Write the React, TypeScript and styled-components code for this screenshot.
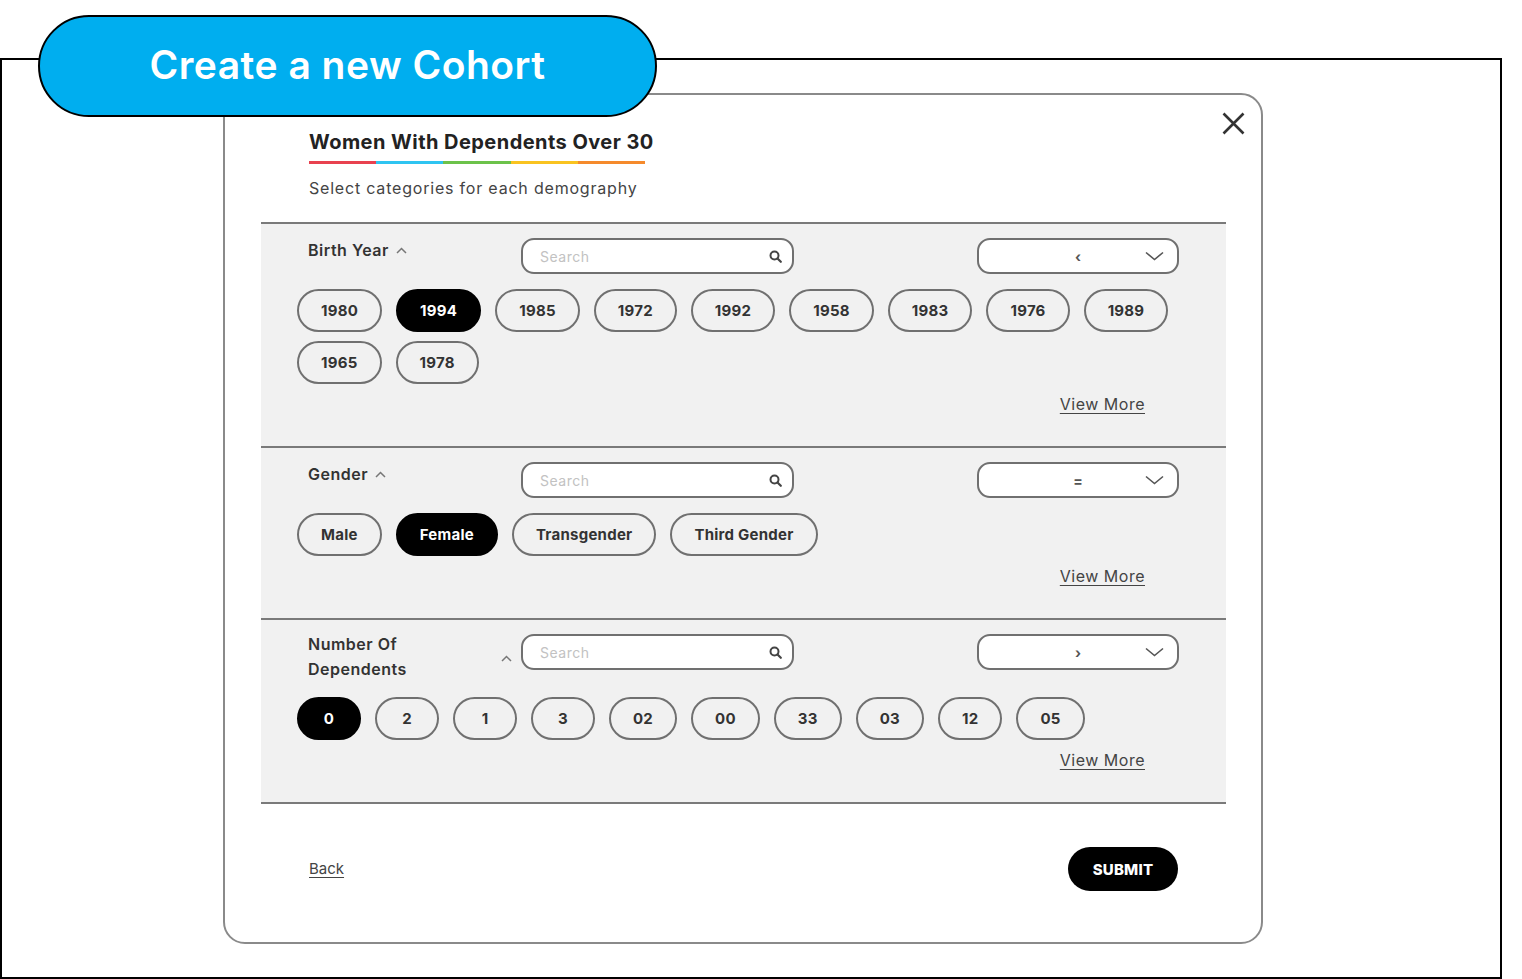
import React from 'react';
import styled, { createGlobalStyle } from 'styled-components';

const GlobalStyle = createGlobalStyle`
    body {
        margin: 0;
        background: #fff;
        font-family: 'Inter', 'Noto Sans', sans-serif;
        color: #333;
    }
    * {
        box-sizing: border-box;
    }
`;

const Page = styled.div`
    padding-top: 58px;
`;

const Frame = styled.div`
    position: relative;
    width: 1502px;
    height: 921px;
    border: 2px solid #000;
`;

const Badge = styled.div`
    position: absolute;
    top: -45px;
    left: 36px;
    width: 619px;
    height: 102px;
    border: 2px solid #000;
    border-radius: 51px;
    background: #00aeef;
    color: #fff;
    display: flex;
    align-items: center;
    justify-content: center;
    padding-bottom: 4px;
    font-size: 39px;
    font-weight: 600;
    letter-spacing: 0.5px;
    z-index: 2;
`;

const Card = styled.div`
    position: relative;
    margin: 33px 0 0 221px;
    width: 1040px;
    height: 851px;
    border: 2px solid #8a8a8a;
    border-radius: 22px;
    padding-top: 33px;
`;

const CloseBtn = styled.button`
    position: absolute;
    top: 17px;
    right: 16px;
    width: 23px;
    height: 23px;
    padding: 0;
    border: none;
    background: none;
    display: flex;
`;

const Header = styled.div`
    padding: 0 84px;
`;

const Title = styled.h2`
    margin: 0;
    display: inline-block;
    font-size: 20px;
    line-height: 28px;
    font-weight: 700;
    letter-spacing: 0.45px;
    color: #222;
`;

const Rainbow = styled.div`
    width: 336px;
    height: 3px;
    margin-top: 5px;
    background: linear-gradient(
        to right,
        #e8414f 0 20%,
        #2ec4f1 20% 40%,
        #6cc24a 40% 60%,
        #f9c320 60% 80%,
        #f58a2c 80% 100%
    );
`;

const Subtitle = styled.p`
    margin: 13px 0 0;
    font-size: 16px;
    line-height: 22px;
    letter-spacing: 0.8px;
    color: #444;
`;

const Sections = styled.div`
    margin: 23px 35px 0 36px;
    border-bottom: 2px solid #7a7a7a;
`;

const Section = styled.section`
    background: #f1f1f1;
    border-top: 2px solid #7a7a7a;
    padding: 14px 47px 32px 36px;
`;

const HeadRow = styled.div`
    display: flex;
    align-items: flex-start;
`;

const LabelCol = styled.div<{ $wrap?: boolean }>`
    width: 215px;
    margin-right: 9px;
    margin-top: ${({ $wrap }) => ($wrap ? '-2px' : '0')};
    padding-left: 11px;
    display: flex;
    align-items: center;
    min-height: ${({ $wrap }) => ($wrap ? '50px' : '25px')};
`;

const LabelText = styled.span<{ $wrap?: boolean }>`
    font-size: 16px;
    line-height: 25px;
    font-weight: 600;
    letter-spacing: 0.5px;
    color: #333;
    max-width: ${({ $wrap }) => ($wrap ? '110px' : 'none')};
`;

const Caret = styled.span<{ $push?: boolean }>`
    display: flex;
    margin-left: ${({ $push }) => ($push ? 'auto' : '7px')};
    margin-top: ${({ $push }) => ($push ? '2px' : '0')};
`;

const SearchBox = styled.label`
    width: 273px;
    height: 36px;
    display: flex;
    align-items: center;
    padding: 0 10px 0 17px;
    background: #fff;
    border: 2px solid #707070;
    border-radius: 13px;

    input {
        flex: 1;
        min-width: 0;
        border: none;
        outline: none;
        background: none;
        font-family: inherit;
        font-size: 14px;
        letter-spacing: 0.5px;
        color: #333;
        padding: 0;
    }
    input::placeholder {
        color: #c2c2c2;
    }
`;

const Dropdown = styled.div`
    margin-left: auto;
    width: 202px;
    height: 36px;
    display: flex;
    align-items: center;
    padding: 0 13px 0 0;
    background: #fff;
    border: 2px solid #707070;
    border-radius: 13px;
`;

const DropValue = styled.span`
    flex: 1;
    text-align: center;
    padding-left: 32px;
    font-size: 14px;
    font-weight: 700;
    color: #555;
`;

const Chips = styled.div`
    display: flex;
    flex-wrap: wrap;
    gap: 9px 14px;
    margin-top: 15px;
`;

const Chip = styled.button<{ $active?: boolean }>`
    height: 43px;
    min-width: 64px;
    padding: 0 22px;
    border-radius: 22px;
    border: 2px solid ${({ $active }) => ($active ? '#000' : '#707070')};
    background: ${({ $active }) => ($active ? '#000' : 'transparent')};
    color: ${({ $active }) => ($active ? '#fff' : '#333')};
    font-family: inherit;
    font-size: 15px;
    font-weight: 700;
    letter-spacing: 0.25px;
`;

const MoreRow = styled.div`
    display: flex;
    justify-content: flex-end;
    padding-right: 34px;
    margin-top: 10px;
`;

const LinkText = styled.a`
    font-size: 16px;
    line-height: 20px;
    letter-spacing: 0.5px;
    color: #444;
    text-decoration: underline;
    text-underline-offset: 3px;
    cursor: pointer;
`;

const BackLink = styled(LinkText)`
    font-size: 15px;
    letter-spacing: 0;
`;

const Footer = styled.div`
    display: flex;
    align-items: center;
    justify-content: space-between;
    margin-top: 43px;
    padding: 0 83px 0 84px;
`;

const SubmitBtn = styled.button`
    width: 110px;
    height: 44px;
    border: none;
    border-radius: 22px;
    background: #000;
    color: #fff;
    font-family: inherit;
    font-size: 15px;
    font-weight: 800;
    letter-spacing: 0.2px;
`;

const CaretUp = () => (
    <svg width="11" height="7" viewBox="0 0 11 7">
        <path d="M1 6 L5.5 1.5 L10 6" fill="none" stroke="#777" strokeWidth="1.5" />
    </svg>
);

const SearchIcon = () => (
    <svg width="13" height="13" viewBox="0 0 13 13">
        <circle cx="5.5" cy="5.5" r="4" fill="none" stroke="#444" strokeWidth="2" />
        <path d="M8.5 8.5 L11.8 11.8" stroke="#444" strokeWidth="2.2" strokeLinecap="round" />
    </svg>
);

const ChevronDown = () => (
    <svg width="19" height="10" viewBox="0 0 19 10">
        <path d="M1 1.5 L9.5 8.5 L18 1.5" fill="none" stroke="#555" strokeWidth="1.6" />
    </svg>
);

const CloseIcon = () => (
    <svg width="23" height="23" viewBox="0 0 23 23">
        <path d="M1.5 1.5 L21.5 21.5 M21.5 1.5 L1.5 21.5" stroke="#333" strokeWidth="2.6" />
    </svg>
);

type Demo = {
    label: string;
    wrap?: boolean;
    op: string;
    items: string[];
    active: string;
};

const demographies: Demo[] = [
    {
        label: 'Birth Year',
        op: '‹',
        items: ['1980', '1994', '1985', '1972', '1992', '1958', '1983', '1976', '1989', '1965', '1978'],
        active: '1994'
    },
    {
        label: 'Gender',
        op: '=',
        items: ['Male', 'Female', 'Transgender', 'Third Gender'],
        active: 'Female'
    },
    {
        label: 'Number Of Dependents',
        wrap: true,
        op: '›',
        items: ['0', '2', '1', '3', '02', '00', '33', '03', '12', '05'],
        active: '0'
    }
];

export default function App() {
    return (
        <Page>
            <GlobalStyle />
            <Frame>
                <Badge>Create a new Cohort</Badge>
                <Card>
                    <CloseBtn aria-label="close"><CloseIcon /></CloseBtn>
                    <Header>
                        <Title>Women With Dependents Over 30</Title>
                        <Rainbow />
                        <Subtitle>Select categories for each demography</Subtitle>
                    </Header>

                    <Sections>
                        {demographies.map((d) => (
                            <Section key={d.label}>
                                <HeadRow>
                                    <LabelCol $wrap={d.wrap}>
                                        <LabelText $wrap={d.wrap}>{d.label}</LabelText>
                                        <Caret $push={d.wrap}><CaretUp /></Caret>
                                    </LabelCol>
                                    <SearchBox>
                                        <input placeholder="Search" />
                                        <SearchIcon />
                                    </SearchBox>
                                    <Dropdown>
                                        <DropValue>{d.op}</DropValue>
                                        <ChevronDown />
                                    </Dropdown>
                                </HeadRow>
                                <Chips>
                                    {d.items.map((item) => (
                                        <Chip key={item} $active={item === d.active}>{item}</Chip>
                                    ))}
                                </Chips>
                                <MoreRow>
                                    <LinkText>View More</LinkText>
                                </MoreRow>
                            </Section>
                        ))}
                    </Sections>

                    <Footer>
                        <BackLink>Back</BackLink>
                        <SubmitBtn>SUBMIT</SubmitBtn>
                    </Footer>
                </Card>
            </Frame>
        </Page>
    );
}
